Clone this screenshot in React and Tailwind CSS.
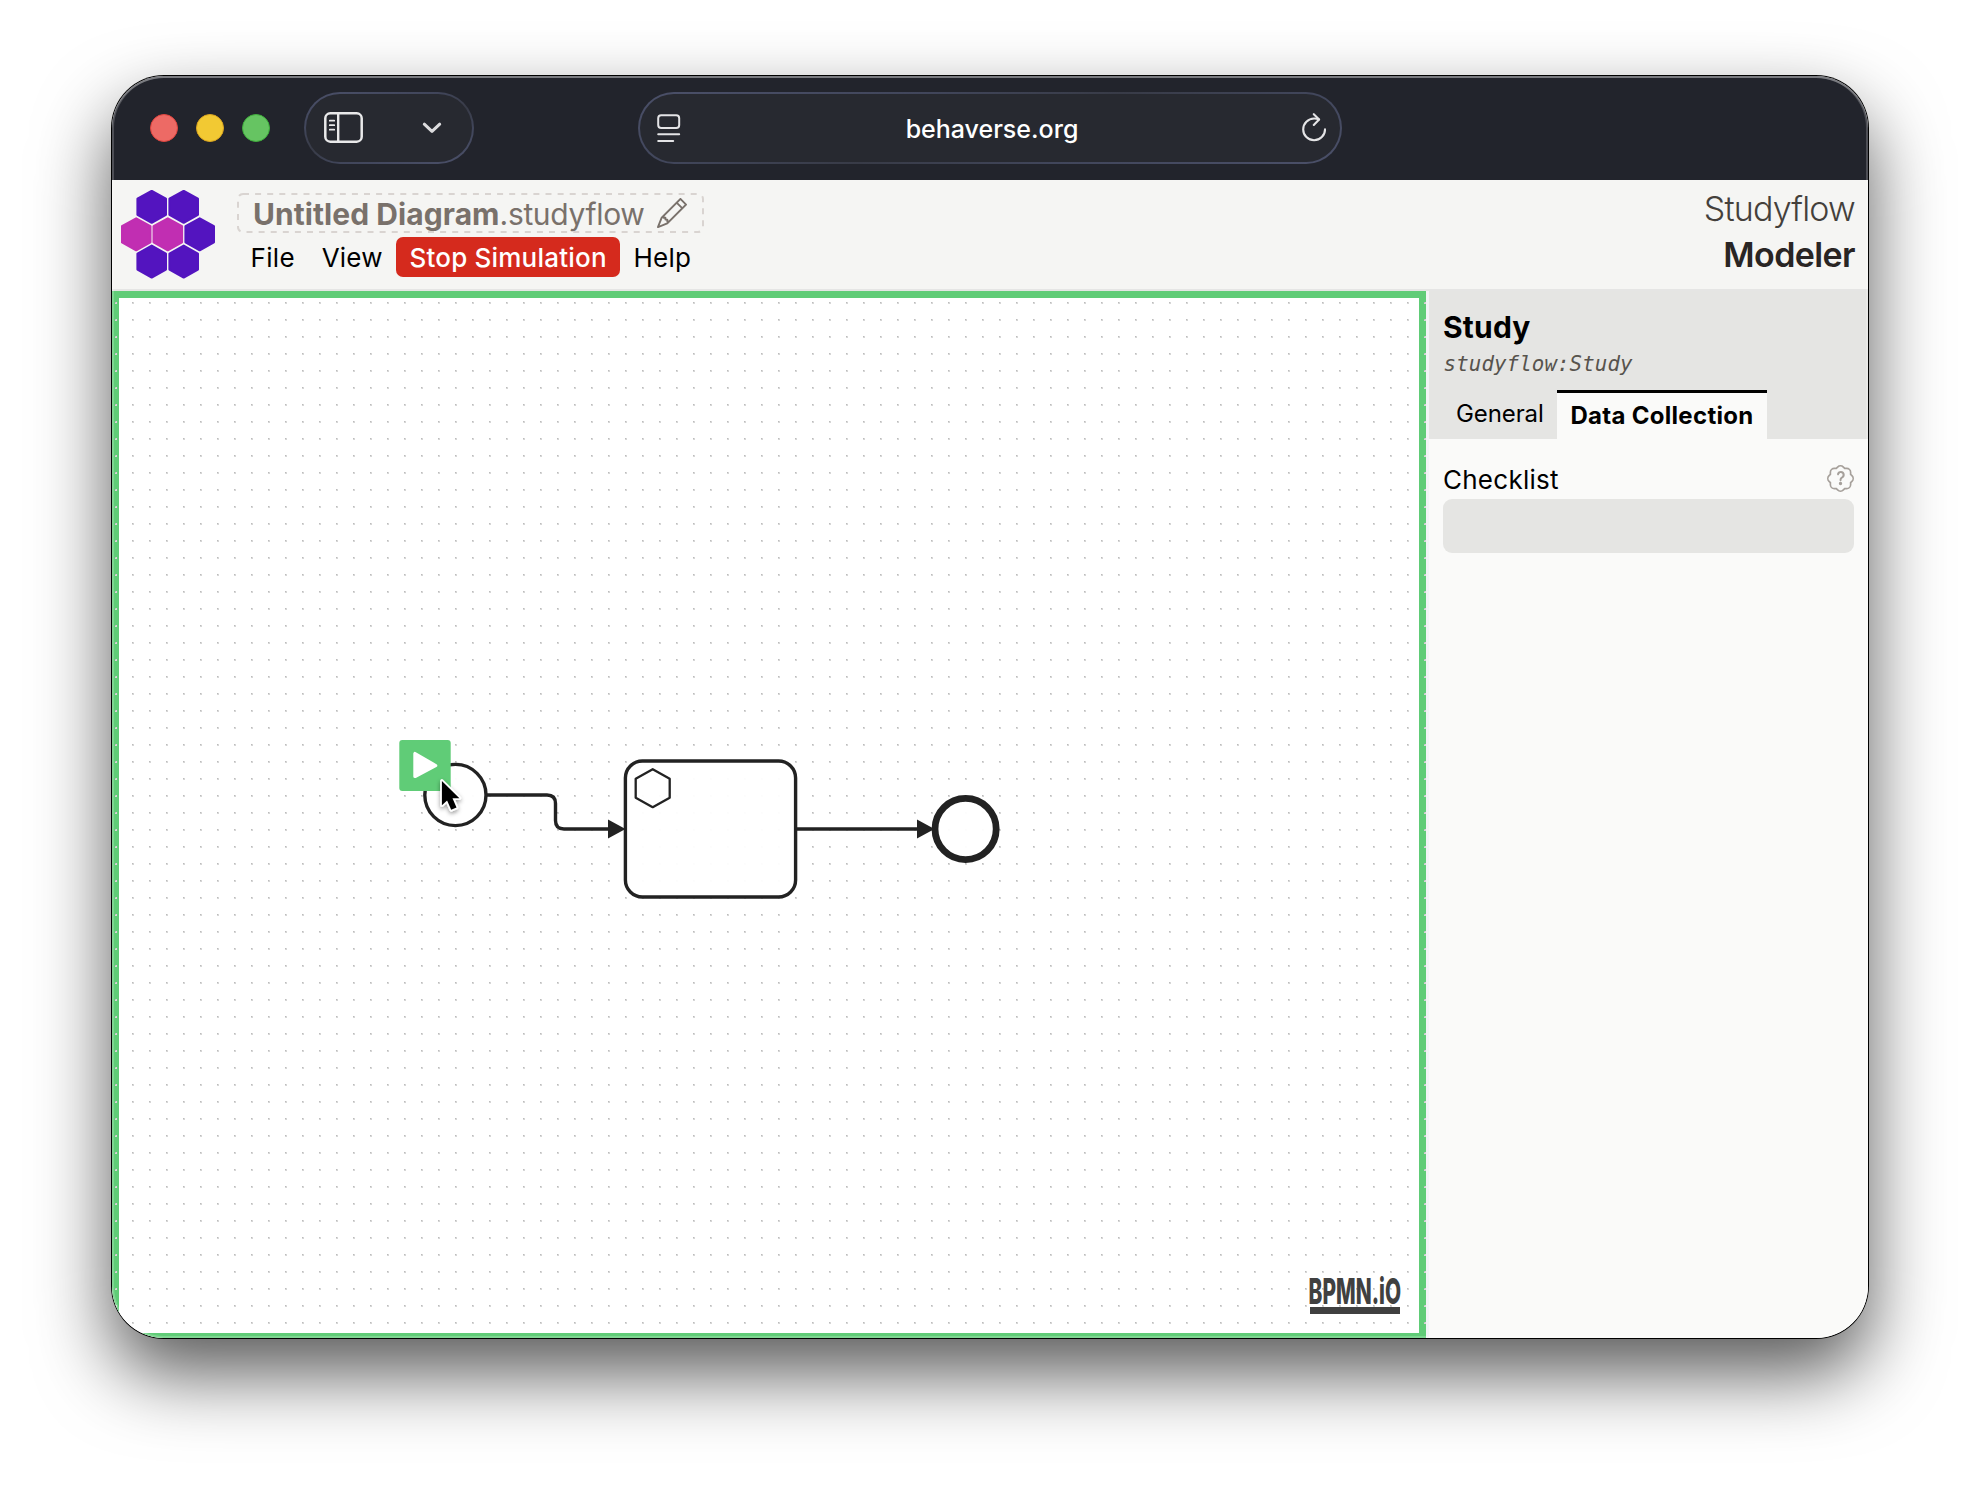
import React from "react";
import { BsPencil, BsPatchQuestion } from "react-icons/bs";

const INK = "#222222";

function GlassPill({ className, children }) {
  return (
    <div
      className={
        "h-[72px] shrink-0 rounded-full bg-[linear-gradient(165deg,#4b5069_0%,#41465b_30%,#383b47_50%,#41465b_70%,#4b5069_100%)] p-[1.7px] " +
        className
      }
    >
      <div className="flex h-full items-center rounded-full bg-[#272930] pb-px">{children}</div>
    </div>
  );
}

function SidebarIcon() {
  return (
    <svg width="39" height="31" viewBox="0 0 39 31" fill="none" stroke="#e9e9ea" strokeLinecap="round">
      <rect x="1.3" y="1.3" width="36.4" height="28.4" rx="5" strokeWidth="2.5" />
      <path d="M14.2 2v27" strokeWidth="2.4" strokeLinecap="butt" />
      <path d="M5.8 8.7h4.4M5.8 13.2h4.4M5.8 17.7h4.4" strokeWidth="1.8" />
    </svg>
  );
}

function TitleBar() {
  return (
    <div className="flex h-[104px] shrink-0 items-center bg-[#22242c] pl-[38px]">
      <div className="flex gap-[18px]">
        <span className="size-7 rounded-full border border-[#e0443e] bg-[#ed6a65]" />
        <span className="size-7 rounded-full border border-[#dba520] bg-[#f2c933]" />
        <span className="size-7 rounded-full border border-[#3fae3c] bg-[#66c462]" />
      </div>
      <GlassPill className="ml-[34px] w-[170px]">
        <div className="flex items-center pl-[18px]">
          <SidebarIcon />
          <svg className="ml-[59px]" width="20" height="12" viewBox="0 0 20 12" fill="none">
            <path d="M2.3 2.2 10 9.4l7.7-7.2" stroke="#dcdcde" strokeWidth="3" strokeLinecap="round" strokeLinejoin="round" />
          </svg>
        </div>
      </GlassPill>
      <GlassPill className="ml-[164px] w-[704px]">
        <div className="flex w-full items-center justify-between pr-[13px] pl-[17px]">
          <svg width="24" height="28" viewBox="0 0 24 28" fill="none" stroke="#e4e4e6" strokeWidth="2" strokeLinecap="round">
            <rect x="1.2" y="1.2" width="21" height="12.8" rx="3" />
            <path d="M1.2 20.3h21M1.2 27h15" />
          </svg>
          <span className="pt-[3px] pl-px text-[25px] leading-8 font-medium text-white">behaverse.org</span>
          <svg width="25" height="29" viewBox="0 0 25 29" fill="none" stroke="#e4e4e6" strokeWidth="2.1" strokeLinecap="round" strokeLinejoin="round">
            <path d="M23 16.4a10.9 10.9 0 1 1-10.9-10.9c1.8 0 3.4.3 4.8 1" />
            <path d="M11.8 1.2l5.3 5.3-5.3 5.4" />
          </svg>
        </div>
      </GlassPill>
    </div>
  );
}

const HEX = "M0-15.9 14.2-8V8L0 15.9-14.2 8V-8Z";
const CELLS = [
  [30.7, 16.8, "#5314bf"],
  [62.7, 16.8, "#5314bf"],
  [15.2, 44.3, "#c12eb2"],
  [46.8, 44.3, "#c12eb2"],
  [78.7, 44.3, "#5314bf"],
  [30.7, 71.6, "#5314bf"],
  [62.7, 71.6, "#5314bf"],
];

function Logo() {
  return (
    <svg className="mt-[10px] ml-[9px] shrink-0" width="95" height="90" viewBox="0 0 95 90">
      {CELLS.map(([x, y, c]) => (
        <path key={x + "-" + y} d={HEX} transform={`translate(${x} ${y})`} fill={c} stroke={c} strokeWidth="2.2" strokeLinejoin="round" />
      ))}
    </svg>
  );
}

function Header() {
  return (
    <div className="flex h-[111px] shrink-0 border-b-2 border-[#e5e5e4] bg-[#f5f5f3]">
      <Logo />
      <div className="pt-[13px] pl-[20px]">
        <div className="relative ml-px flex h-10 w-[467px] items-center pl-4 text-[30px] text-[#79716b]">
          <svg className="absolute inset-0" width="467" height="40" fill="none">
            <rect x="1" y="1" width="465" height="38" rx="5" stroke="#d9d4d1" strokeWidth="2" strokeDasharray="6 6.1" />
          </svg>
          <span className="pt-[2px] leading-9 whitespace-nowrap">
            <b className="font-bold tracking-[0.06px]">Untitled Diagram</b>
            <span className="tracking-[-0.33px]">.studyflow</span>
          </span>
          <BsPencil className="ml-[13px]" size={30} />
        </div>
        <div className="mt-1 flex h-10 items-stretch text-[26px] leading-[42px] tracking-[0.2px] text-black">
          <span className="pr-[13.4px] pl-[14.6px] tracking-[0.3px]">File</span>
          <span className="px-[13.4px]">View</span>
          <span className="rounded-[7px] bg-[#d52a1d] px-[13.4px] font-medium text-white">Stop Simulation</span>
          <span className="px-[13.4px]">Help</span>
        </div>
      </div>
      <div className="ml-auto flex flex-col items-end pt-[6px] pr-[13px] text-[34px] leading-[46px]">
        <span className="font-light tracking-[-0.8px] text-[#44403b]">Studyflow</span>
        <span className="font-semibold tracking-[-0.6px] text-[#292524]">Modeler</span>
      </div>
    </div>
  );
}

function Diagram() {
  return (
    <svg className="block" width="1314" height="1047" viewBox="112 291 1314 1047" fill="none">
      <defs>
        <pattern id="dots" x="115" y="302" width="17" height="17" patternUnits="userSpaceOnUse">
          <rect width="2" height="2" fill="#d6d6d6" />
          <rect width="1" height="1" fill="#bcbcbc" />
        </pattern>
        <filter id="soft" x="-50%" y="-50%" width="200%" height="200%">
          <feDropShadow dx="0" dy="2" stdDeviation="2" floodOpacity="0.4" />
        </filter>
      </defs>
      <rect x="112" y="299" width="1314" height="1039" fill="url(#dots)" />

      <g stroke={INK} strokeWidth="3.4" strokeLinejoin="round">
        <path d="M486 795h61q8.5 0 8.5 8.5v17q0 8.5 8.5 8.5h46" />
        <path d="M796 829h122" />
        <circle cx="455.4" cy="795" r="30.6" fill="#fff" fillOpacity="0.95" />
        <rect x="625.4" y="761" width="170.2" height="136" rx="17" fill="#fff" fillOpacity="0.95" />
        <circle cx="965.6" cy="829" r="30.6" fill="#fff" fillOpacity="0.95" strokeWidth="6.8" />
        <path d="M652.7 769.2 669.7 778.8v19l-17 9.4-17-9.4V778.8Z" strokeWidth="2.3" />
      </g>
      <path d="M608 819.5v19l17.5-9.5ZM917 819.5v19l17.5-9.5Z" fill={INK} />

      <rect x="399.3" y="740" width="51.4" height="51" rx="3" fill="#60cc77" />
      <path d="M415 753.6v22.8L435.6 765.6Z" fill="#fff" stroke="#fff" strokeWidth="3.4" strokeLinejoin="round" />

      <path
        d="M441.9 781v24.2l5.2-4.8 4.1 9.4 5.3-2.3-4-9.2h6.9Z"
        fill="#000"
        stroke="#fff"
        strokeWidth="3.6"
        strokeLinejoin="round"
        paintOrder="stroke"
        filter="url(#soft)"
      />

      <g fill="#404040">
        <text
          transform="translate(1308.6 1304) scale(0.62 1)"
          fontFamily="Inter, sans-serif"
          fontWeight="800"
          fontSize="35.5"
          textLength="149"
          lengthAdjust="spacingAndGlyphs"
        >
          BPMN.iO
        </text>
        <rect x="1310" y="1307" width="90" height="7" />
      </g>
    </svg>
  );
}

function PropertiesPanel() {
  return (
    <div className="flex min-w-0 flex-1 flex-col border-l-[3px] border-[#f3f4f6] bg-[#fafaf9] text-black">
      <div className="flex h-[148px] flex-col bg-[#e5e5e3] pt-[18px] pl-[14px]">
        <div className="text-[30px] leading-9 font-bold tracking-[0.2px]">Study</div>
        <div className="mt-[5px] pl-[0.6px] font-['DejaVu_Sans_Mono',monospace] text-[20.8px] leading-7 tracking-[0.08px] text-[#57534d] italic">
          studyflow:Study
        </div>
        <div className="mt-auto flex h-[49px] text-[24px]">
          <span className="px-[13px] leading-[48px] tracking-[-0.1px]">General</span>
          <span className="ml-[0.7px] w-[210px] border-t-[3px] border-black bg-[#fafaf9] pl-[13px] leading-[46px] font-bold tracking-[0.3px] whitespace-nowrap">
            Data Collection
          </span>
        </div>
      </div>
      <div className="px-[14px] pt-6">
        <div className="mb-[3px] flex h-[33px] items-center justify-between text-[26px] leading-8 tracking-[0.25px]">
          <span>Checklist</span>
          <BsPatchQuestion size={27} className="mb-[2px] text-[#a6a09b]" />
        </div>
        <div className="h-[54px] rounded-[9px] bg-[#e5e5e3]" />
      </div>
    </div>
  );
}

export default function App() {
  return (
    <div className="h-[1486px] w-[1980px] overflow-hidden bg-white px-[112px] pt-[76px] font-['Inter',sans-serif]">
      <div className="relative h-[1262px] rounded-[52px] shadow-[0_0_0_1px_#000,0_35px_76px_rgba(0,0,0,0.66)]">
        <div className="flex h-full flex-col overflow-hidden rounded-[52px]">
          <TitleBar />
          <Header />
          <div className="flex flex-1">
            <div className="w-[1314px] shrink-0 bg-white shadow-[inset_7px_7px_0_#60cc77,inset_-7px_-5px_0_#60cc77]">
              <Diagram />
            </div>
            <PropertiesPanel />
          </div>
        </div>
        <div className="pointer-events-none absolute inset-0 rounded-[52px] shadow-[inset_0_2px_0_rgba(255,255,255,0.25),inset_0_0_0_2px_rgba(255,255,255,0.2)]" />
      </div>
    </div>
  );
}
